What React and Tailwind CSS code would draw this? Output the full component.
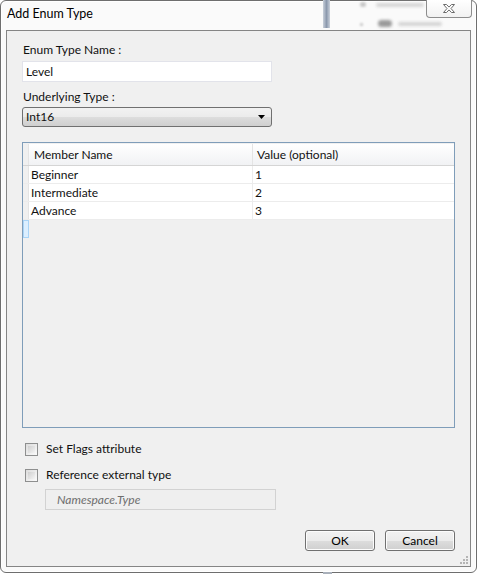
import { useState } from "react";

const rows = [
  { name: "Beginner", value: "1" },
  { name: "Intermediate", value: "2" },
  { name: "Advance", value: "3" },
];

const Checkbox = ({ label }) => (
  <label className="flex items-center h-4 gap-[8px] pl-[3px]">
    <span className="w-[13px] h-[13px] border border-[#8e8f8f] bg-gradient-to-br from-[#dcdcdc] to-[#fbfbfb] p-[2px]">
      <span className="block w-full h-full bg-gradient-to-br from-[#cfcfcf] to-[#f4f4f4]"></span>
    </span>
    <span>{label}</span>
  </label>
);

const DlgButton = ({ children }) => (
  <button className="w-[70px] h-[21px] rounded-[3px] border border-[#707070] bg-[linear-gradient(#f2f2f2_0%,#ebebeb_50%,#dddddd_51%,#cfcfcf_100%)] shadow-[inset_0_0_0_1px_#fcfcfc] text-black leading-none">
    {children}
  </button>
);

export default function App() {
  const [name, setName] = useState("Level");

  return (
    <div className="w-[479px] h-[574px] bg-white relative overflow-hidden text-[12px] text-[#111] font-['Segoe_UI','Lato','Noto_Sans',sans-serif]">
      {/* blurred desktop behind the glass */}
      <div className="absolute left-[323px] top-0 w-[7px] h-[28px] bg-gradient-to-r from-[#c9d0da] via-[#8c99ad] to-[#c9d0da] z-10"></div>
      <div className="absolute left-[360px] top-[2px] w-[6px] h-[5px] rounded-full bg-[#c8c8c8] blur-[1px] z-10"></div>
      <div className="absolute left-[376px] top-[3px] w-[48px] h-[4px] rounded-full bg-[#d6d6d6] blur-[1.5px] z-10"></div>
      <div className="absolute left-[360px] top-[23px] w-[3px] h-[3px] rounded-full bg-[#c0c0c0] blur-[1px] z-10"></div>
      <div className="absolute left-[378px] top-[20px] w-[14px] h-[7px] rounded-full bg-[#9a9a9a] blur-[1.5px] z-10"></div>
      <div className="absolute left-[398px] top-[22px] w-[44px] h-[4px] rounded-full bg-[#d4d4d4] blur-[1.5px] z-10"></div>
      <div className="absolute left-[323px] top-[572px] w-[9px] h-[2px] bg-[#a9b0ba]"></div>

      <div className="w-[477px] h-[573px] border border-[#6e6e6e] rounded-[6px] bg-[#fafafa] flex flex-col px-[5px] pb-[5px] shadow-[inset_0_0_0_1px_#ffffff]">
        {/* title bar */}
        <div className="h-[29px] flex justify-between items-start">
          <div className="pl-[1px] pt-[5px] text-[12.5px] leading-[16px] text-black">Add Enum Type</div>
          <div className="relative z-20 w-[46px] h-[18px] mt-[-1px] mr-[-1px] rounded-b-[4px] border border-[#8d8d8d] border-t-0 bg-gradient-to-b from-[#ffffff] to-[#f2f2f2] flex items-center justify-center">
            <svg width="14" height="11" viewBox="0 0 14 11">
              <path
                d="M1.5 1.5h3l2.5 2.6 2.5-2.6h3L9 5.5l3.5 4h-3L7 6.9 4.5 9.5h-3L5 5.5z"
                fill="#ffffff"
                stroke="#6b6b6b"
                strokeWidth="1"
                strokeLinejoin="round"
              />
            </svg>
          </div>
        </div>

        {/* client area */}
        <div className="flex-1 border border-[#858585] bg-[#f0f0f0] flex flex-col pl-[15px] pr-[15px] pt-[11px]">
          <div className="pl-[1px] h-4 leading-4">Enum Type Name :</div>
          <input
            value={name}
            onChange={(e) => setName(e.target.value)}
            className="mt-[3px] w-[250px] h-[21px] border border-[#e2e3ea] bg-white px-[3px] outline-none"
          />

          <div className="pl-[1px] mt-[7px] h-4 leading-4">Underlying Type :</div>
          <div className="mt-[2px] w-[250px] h-[20px] rounded-[3px] border border-[#707070] bg-[linear-gradient(#f2f2f2_0%,#ebebeb_50%,#dddddd_51%,#cfcfcf_100%)] flex items-center justify-between pl-[3px] pr-[6px]">
            <span>Int16</span>
            <svg width="7" height="4" viewBox="0 0 7 4">
              <path d="M0 0h7L3.5 4z" fill="#000" />
            </svg>
          </div>

          {/* members grid */}
          <div className="mt-[15px] w-[433px] h-[286px] border border-[#7f9db9] bg-[#f0f0f0] pt-[1px] flex flex-col">
            <div className="flex h-[22px] bg-gradient-to-b from-[#ffffff] to-[#f1f2f4] border-b border-[#d5d5d5]">
              <div className="w-[6px] bg-[#f0f0f0] border-r border-[#e4e4e4]"></div>
              <div className="w-[224px] pl-[5px] flex items-center border-r border-[#e4e4e4]">Member Name</div>
              <div className="flex-1 pl-[4px] flex items-center">Value (optional)</div>
            </div>
            {rows.map((r) => (
              <div key={r.name} className="flex h-[18px] bg-white border-b border-[#ececec]">
                <div className="w-[6px] bg-[#f0f0f0] border-r border-[#e4e4e4]"></div>
                <div className="w-[224px] pl-[2px] flex items-center border-r border-[#ececec]">{r.name}</div>
                <div className="flex-1 pl-[2px] flex items-center">{r.value}</div>
              </div>
            ))}
            <div className="flex h-[18px]">
              <div className="w-[6px] bg-[#dcefff] border border-[#a9d4f7]"></div>
            </div>
          </div>

          <div className="mt-[13px] flex flex-col gap-[10px]">
            <Checkbox label="Set Flags attribute" />
            <Checkbox label="Reference external type" />
          </div>

          <div className="mt-[6px] ml-[23px] w-[231px] h-[21px] border border-[#d2d2d2] bg-[#efefef] flex items-center pl-[11px] italic text-[#6d6d6d]">
            Namespace.Type
          </div>

          <div className="mt-[20px] flex justify-end gap-[10px]">
            <DlgButton>OK</DlgButton>
            <DlgButton>Cancel</DlgButton>
          </div>

          <div className="mt-auto mb-[2px] mr-[-13px] self-end grid grid-cols-3 gap-[1px]">
            <span></span>
            <span></span>
            <span className="w-[2px] h-[2px] bg-[#b5b5b5]"></span>
            <span></span>
            <span className="w-[2px] h-[2px] bg-[#b5b5b5]"></span>
            <span className="w-[2px] h-[2px] bg-[#b5b5b5]"></span>
            <span className="w-[2px] h-[2px] bg-[#b5b5b5]"></span>
            <span className="w-[2px] h-[2px] bg-[#b5b5b5]"></span>
            <span className="w-[2px] h-[2px] bg-[#b5b5b5]"></span>
          </div>
        </div>
      </div>
    </div>
  );
}
